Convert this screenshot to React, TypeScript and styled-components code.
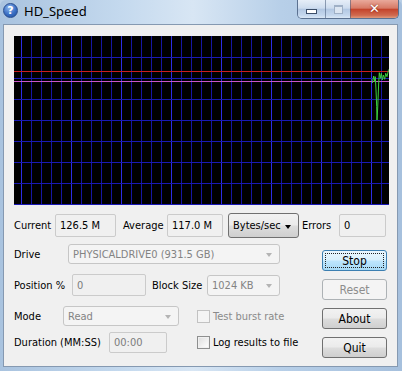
import React from 'react'
import styled, { createGlobalStyle, css } from 'styled-components'

const FONT = `"DejaVu Sans Condensed", "DejaVu Sans", Tahoma, sans-serif`

const GlobalStyle = createGlobalStyle`
  html, body {
    margin: 0;
    padding: 0;
  }
  body {
    width: 402px;
    height: 371px;
    overflow: hidden;
    background: #b9cfe6;
  }
`

const Window = styled.div`
  width: 402px;
  height: 371px;
  box-sizing: border-box;
  display: flex;
  flex-direction: column;
  padding: 0 4px 4px 3px;
  border-radius: 6px 6px 0 0;
  background: linear-gradient(
    90deg,
    #a9c3df 0%,
    #c4d9ee 30%,
    #d8e6f4 48%,
    #b7cfe8 70%,
    #a6c0dd 100%
  );
`

const TitleBar = styled.div`
  height: 24px;
  display: flex;
  align-items: flex-start;
`

const AppIcon = styled.span`
  width: 15px;
  height: 15px;
  margin-top: 3px;
  border-radius: 50%;
  box-sizing: border-box;
  border: 1px solid #2a4f8f;
  background: radial-gradient(circle at 40% 30%, #8fb8ee 0%, #3a6fc4 55%, #1d4a9a 100%);
  color: #fff;
  font: bold 11px/13px 'DejaVu Sans', sans-serif;
  text-align: center;
`

const Title = styled.span`
  margin: 2px 0 0 6px;
  font: 13px/18px 'Noto Sans', 'Open Sans', sans-serif;
  color: #000;
`

const Caption = styled.div`
  margin-left: auto;
  margin-right: -1px;
  display: flex;
  height: 18px;
  border: 1px solid #5b7190;
  border-top: none;
  border-radius: 0 0 5px 5px;
  overflow: hidden;
`

const CapBtn = styled.div<{ $w: number; $close?: boolean }>`
  width: ${p => p.$w}px;
  display: flex;
  align-items: center;
  justify-content: center;
  border-left: 1px solid rgba(70, 90, 120, 0.55);
  &:first-child {
    border-left: none;
  }
  ${p =>
    p.$close
      ? css`
          background: linear-gradient(#e9a99b 0%, #d77a66 45%, #c4442c 52%, #d06a4f 85%, #e09a7c 100%);
        `
      : css`
          background: linear-gradient(#e6eef8 0%, #cddcee 45%, #b3c8e3 52%, #c5d8ee 85%, #dbe8f6 100%);
        `}
`

const MinGlyph = styled.span`
  width: 9px;
  height: 3px;
  margin-top: 5px;
  background: #fff;
  border: 1px solid #3b4e69;
`

const MaxGlyph = styled.span`
  width: 7px;
  height: 6px;
  border: 1px solid #9fb0c6;
  border-top-width: 2px;
  background: #dce6f2;
`

const CloseGlyph = styled.span`
  color: #fff;
  font: bold 13px/14px 'DejaVu Sans', sans-serif;
  text-shadow: 0 0 2px #7a1a0a;
`

const Client = styled.div`
  flex: 1;
  display: flex;
  flex-direction: column;
  padding: 11px 8px 0 10px;
  background: #f0f0f0;
  border: 1px solid #8599b1;
  font-family: ${FONT};
  font-size: 11px;
  color: #000;
`

const ChartSvg = styled.svg`
  display: block;
  width: 375px;
  height: 169px;
  background: #000;
`

const Row = styled.div<{ $mt?: number; $h: number }>`
  display: flex;
  align-items: center;
  height: ${p => p.$h}px;
  margin-top: ${p => p.$mt ?? 0}px;
`

const Label = styled.span<{ $w?: number; $ml?: number; $dim?: boolean }>`
  width: ${p => (p.$w ? `${p.$w}px` : 'auto')};
  margin-left: ${p => p.$ml ?? 0}px;
  white-space: nowrap;
  color: ${p => (p.$dim ? '#8a8a8a' : '#000')};
`

const TextBox = styled.div<{ $w: number; $h: number; $ml?: number; $dim?: boolean }>`
  width: ${p => p.$w}px;
  height: ${p => p.$h}px;
  margin-left: ${p => p.$ml ?? 0}px;
  box-sizing: border-box;
  display: flex;
  align-items: center;
  padding-left: 4px;
  border: 1px solid #cbcbcb;
  border-radius: 2px;
  background: #f0f0f0;
  color: ${p => (p.$dim ? '#7c7c7c' : '#000')};
`

const Combo = styled.div<{ $w: number; $h: number; $ml?: number; $on?: boolean }>`
  position: relative;
  width: ${p => p.$w}px;
  height: ${p => p.$h}px;
  margin-left: ${p => p.$ml ?? 0}px;
  box-sizing: border-box;
  display: flex;
  align-items: center;
  padding-left: 4px;
  border-radius: 3px;
  ${p =>
    p.$on
      ? css`
          border: 1px solid #707070;
          background: linear-gradient(#f2f2f2 0%, #ebebeb 48%, #dddddd 52%, #cfcfcf 100%);
          color: #000;
        `
      : css`
          border: 1px solid #c6c6c6;
          background: #f4f4f4;
          color: #838383;
        `}
  &::after {
    content: '';
    position: absolute;
    right: 7px;
    top: 50%;
    margin-top: -1px;
    border-left: 3.5px solid transparent;
    border-right: 3.5px solid transparent;
    border-top: 4px solid ${p => (p.$on ? '#000' : '#b4b4b4')};
  }
`

const Check = styled.span<{ $ml?: number; $dim?: boolean }>`
  width: 13px;
  height: 13px;
  margin-left: ${p => p.$ml ?? 0}px;
  margin-right: 3px;
  box-sizing: border-box;
  border: 1px solid ${p => (p.$dim ? '#c2c2c2' : '#8e8f8f')};
  background: ${p =>
    p.$dim ? '#f4f4f4' : 'linear-gradient(135deg, #dcdcdc 0%, #f2f2f2 60%, #ffffff 100%)'};
  box-shadow: inset 0 0 0 1px ${p => (p.$dim ? '#f4f4f4' : '#f0f0f0')};
`

const Lower = styled.div`
  display: flex;
  margin-top: 7px;
`

const Form = styled.div`
  flex: 1;
  display: flex;
  flex-direction: column;
`

const Buttons = styled.div`
  width: 65px;
  margin: 6px 2px 0 0;
  display: flex;
  flex-direction: column;
  gap: 8px;
`

const Btn = styled.div<{ $kind?: 'focus' | 'off' }>`
  position: relative;
  height: 21px;
  box-sizing: border-box;
  display: flex;
  align-items: center;
  justify-content: center;
  border-radius: 3px;
  border: 1px solid #707070;
  background: linear-gradient(#f2f2f2 0%, #ebebeb 48%, #dddddd 52%, #cfcfcf 100%);
  font-size: 12px;
  color: #000;
  ${p =>
    p.$kind === 'focus' &&
    css`
      border-color: #3c7fb1;
      background: linear-gradient(#eaf6fd 0%, #d9f0fc 48%, #bee6fd 52%, #a7d9f5 100%);
      &::after {
        content: '';
        position: absolute;
        inset: 2px;
        border: 1px dotted #222;
      }
    `}
  ${p =>
    p.$kind === 'off' &&
    css`
      border-color: #adb2b5;
      background: #f4f4f4;
      color: #8d8d8d;
    `}
`

const greenPts = [
  [358.3, 47], [359.7, 40], [360.7, 45.7], [361.3, 40.7], [362, 54], [362.7, 70.7],
  [363, 84], [363.7, 72], [364.7, 47], [365.3, 36.7], [366.3, 42.3], [367.3, 37.3],
  [368.3, 44], [369.3, 39], [370.7, 43.3], [371.7, 37.3], [373, 40.7], [374.3, 34.7], [375, 33.3],
]

const Chart = () => {
  const vlines = Array.from({ length: 37 }, (_, k) => 7 + k * 10)
  const hlines = Array.from({ length: 8 }, (_, k) => 21 * (k + 1))
  return (
    <ChartSvg viewBox="0 0 375 169">
      {vlines.map((x, k) => (
        <rect key={'v' + x} x={x} y={0} width={1} height={169} fill={k % 5 === 0 ? '#2c2ce6' : '#1616a4'} />
      ))}
      {hlines.map(y => (
        <rect key={'h' + y} x={0} y={y} width={375} height={1} fill="#1a1ab4" />
      ))}
      <rect x={0} y={35} width={375} height={1} fill="#c81e1e" />
      <rect x={0} y={45} width={375} height={1} fill="#c858c8" />
      <polyline
        points={greenPts.map(p => p.join(',')).join(' ')}
        fill="none"
        stroke="#3ccf3c"
        strokeWidth={1}
      />
    </ChartSvg>
  )
}

export default function App() {
  return (
    <>
      <GlobalStyle />
      <Window>
        <TitleBar>
          <AppIcon>?</AppIcon>
          <Title>HD_Speed</Title>
          <Caption>
            <CapBtn $w={27}>
              <MinGlyph />
            </CapBtn>
            <CapBtn $w={24}>
              <MaxGlyph />
            </CapBtn>
            <CapBtn $w={47} $close>
              <CloseGlyph>✕</CloseGlyph>
            </CapBtn>
          </Caption>
        </TitleBar>
        <Client>
          <Chart />
          <Row $mt={9} $h={23}>
            <Label $w={41}>Current</Label>
            <TextBox $w={61} $h={23}>126.5 M</TextBox>
            <Label $w={44} $ml={7}>Average</Label>
            <TextBox $w={56} $h={23}>117.0 M</TextBox>
            <Combo $w={71} $h={25} $ml={5} $on>Bytes/sec</Combo>
            <Label $w={37} $ml={3}>Errors</Label>
            <TextBox $w={47} $h={23}>0</TextBox>
          </Row>
          <Lower>
            <Form>
              <Row $h={20}>
                <Label $w={54}>Drive</Label>
                <Combo $w={212} $h={20}>PHYSICALDRIVE0 (931.5 GB)</Combo>
              </Row>
              <Row $mt={10} $h={22}>
                <Label $w={58}>Position %</Label>
                <TextBox $w={74} $h={22} $dim>0</TextBox>
                <Label $w={55} $ml={6}>Block Size</Label>
                <Combo $w={73} $h={21}>1024 KB</Combo>
              </Row>
              <Row $mt={10} $h={20}>
                <Label $w={49}>Mode</Label>
                <Combo $w={116} $h={20}>Read</Combo>
                <Check $ml={18} $dim />
                <Label $dim>Test burst rate</Label>
              </Row>
              <Row $mt={6} $h={21}>
                <Label $w={95}>Duration (MM:SS)</Label>
                <TextBox $w={58} $h={21} $dim>00:00</TextBox>
                <Check $ml={30} />
                <Label>Log results to file</Label>
              </Row>
            </Form>
            <Buttons>
              <Btn $kind="focus">Stop</Btn>
              <Btn $kind="off">Reset</Btn>
              <Btn>About</Btn>
              <Btn>Quit</Btn>
            </Buttons>
          </Lower>
        </Client>
      </Window>
    </>
  )
}
